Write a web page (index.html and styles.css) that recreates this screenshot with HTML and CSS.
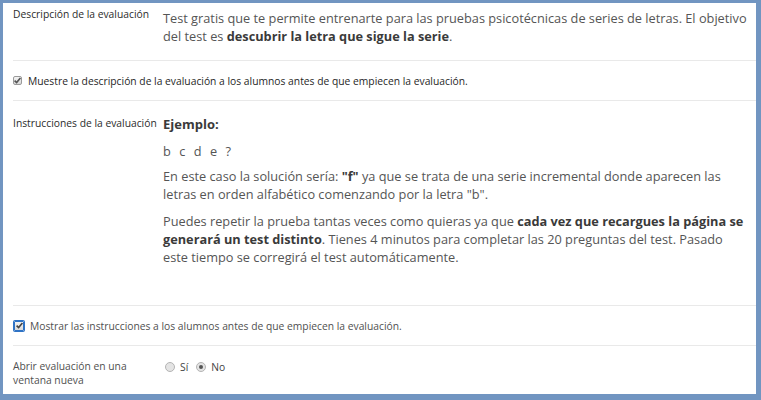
FILE: index.html
```html
<!DOCTYPE html>
<html lang="es">
<head>
  <meta charset="UTF-8" />
  <title>Evaluación</title>
  <link rel="stylesheet" href="styles.css">
</head>
<body>
  <div class="frame">
    <div class="field field-desc">
      <div class="label">Descripción de la evaluación</div>
      <div class="value">
        <p>Test gratis que te permite entrenarte para las pruebas psicotécnicas de series de letras. El objetivo del test es <strong>descubrir la letra que sigue la serie</strong>.</p>
      </div>
    </div>

    <div class="check-row">
      <span class="check">
        <svg viewBox="0 0 9 9" width="9" height="9"><path d="M1.6 4.6 L3.6 6.6 L7.4 2" fill="none" stroke="#555" stroke-width="1.6"/></svg>
      </span>
      <span class="check-text">Muestre la descripción de la evaluación a los alumnos antes de que empiecen la evaluación.</span>
    </div>

    <div class="field field-instr">
      <div class="label">Instrucciones de la evaluación</div>
      <div class="value">
        <p class="heading"><strong>Ejemplo:</strong></p>
        <p class="series">b&nbsp;&nbsp;c&nbsp;&nbsp;d&nbsp;&nbsp;e&nbsp;&nbsp;?</p>
        <p>En este caso la solución sería: <strong>"f"</strong> ya que se trata de una serie incremental donde aparecen las letras en orden alfabético comenzando por la letra "b".</p>
        <p>Puedes repetir la prueba tantas veces como quieras ya que <strong>cada vez que recargues la página se generará un test distinto</strong>. Tienes 4 minutos para completar las 20 preguntas del test. Pasado este&nbsp;tiempo se corregirá el test automáticamente.</p>
      </div>
    </div>

    <div class="check-row">
      <span class="check focused">
        <svg viewBox="0 0 9 9" width="9" height="9"><path d="M1.6 4.6 L3.6 6.6 L7.4 2" fill="none" stroke="#444" stroke-width="1.6"/></svg>
      </span>
      <span class="check-text muted">Mostrar las instrucciones a los alumnos antes de que empiecen la evaluación.</span>
    </div>

    <div class="field field-window">
      <div class="label muted">Abrir evaluación en una ventana nueva</div>
      <div class="radios">
        <span class="radio"></span><span class="radio-text">Sí</span>
        <span class="radio on"></span><span class="radio-text">No</span>
      </div>
    </div>
  </div>
</body>
</html>
```

FILE: styles.css
```css
body {
  margin: 0;
  font-family: 'Open Sans', 'Noto Sans', sans-serif;
  background: #ffffff;
}

.frame {
  box-sizing: border-box;
  width: 761px;
  height: 400px;
  border-style: solid;
  border-color: #7195c1;
  border-width: 3px 5px 6px 3px;
  padding-left: 10px;
  background: #ffffff;
  overflow: hidden;
}

.field {
  display: grid;
  grid-template-columns: 150px 1fr;
  border-bottom: 1px solid #e9e9e9;
  box-sizing: border-box;
}

.label {
  font-size: 10.3px;
  line-height: 14px;
  color: #2b2b2b;
}

.value {
  font-size: 12.75px;
  line-height: 18px;
  color: #555555;
  padding-right: 4px;
}

.value p {
  margin: 0 0 9px 0;
}

.value strong {
  color: #3a3a3a;
}

/* descripción */
.field-desc {
  height: 58px;
  padding-top: 4px;
}

.field-desc .value {
  padding-top: 2px;
}

/* instrucciones */
.field-instr {
  height: 205px;
  padding-top: 14px;
}

.field-instr .label {
  padding-top: 1px;
}

.value .heading {
  font-size: 13px;
  line-height: 18px;
  margin-bottom: 9px;
}

.value .series {
  letter-spacing: 0.6px;
  margin-bottom: 7px;
}

/* casillas */
.check-row {
  display: flex;
  align-items: center;
  gap: 6px;
  height: 39px;
  border-bottom: 1px solid #e9e9e9;
}

.check {
  box-sizing: border-box;
  width: 9px;
  height: 9px;
  border: 1px solid #9a9a9a;
  border-radius: 2px;
  background: linear-gradient(#f4f4f4, #d9d9d9);
  display: flex;
  align-items: center;
  justify-content: center;
}

.check svg {
  display: block;
  flex: none;
}

.check.focused {
  width: 10px;
  height: 10px;
  margin-left: 1px;
  border: 1px solid #2f73c5;
  box-shadow: 0 0 0 1px #2f73c5;
  border-radius: 1px;
}

.check-text {
  font-size: 10.3px;
  color: #1f1f1f;
}

.muted {
  color: #505050;
}

/* ventana nueva */
.field-window {
  border-bottom: none;
  padding-top: 13px;
}

.radios {
  display: flex;
  align-items: center;
  gap: 5px;
  height: 16px;
  padding-left: 2px;
}

.radio {
  box-sizing: border-box;
  width: 10px;
  height: 10px;
  border-radius: 50%;
  border: 1px solid #b4b4b4;
  background: #e4e4e4;
  display: flex;
  align-items: center;
  justify-content: center;
}

.radio.on::after {
  content: "";
  width: 4px;
  height: 4px;
  border-radius: 50%;
  background: #555555;
}

.radio-text {
  font-size: 10.3px;
  color: #444444;
  margin-right: 3px;
}
```
